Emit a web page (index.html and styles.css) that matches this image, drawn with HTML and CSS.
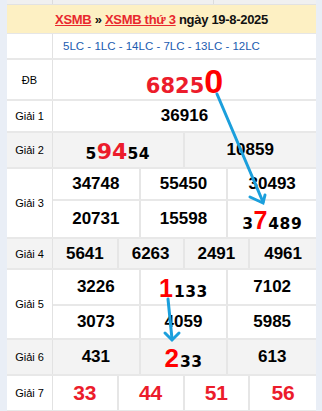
FILE: index.html
```html
<!DOCTYPE html>
<html lang="vi">
<head>
<meta charset="utf-8">
<link rel="stylesheet" href="styles.css">
</head>
<body>
<div class="page">
  <div class="prev"><span class="pl1"></span><span class="pl2"></span></div>
  <div class="head"><span><a href="#">XSMB</a> » <a href="#">XSMB thứ 3</a> ngày 19-8-2025</span></div>
  <div class="codes"><span class="cl"></span>5LC - 1LC - 14LC - 7LC - 13LC - 12LC</div>

  <div class="row h40">
    <div class="label">ĐB</div>
    <div class="cells c1"><div class="cell"><span class="db">6825<b class="bigA z">0</b></span></div></div>
  </div>
  <div class="row h31">
    <div class="label">Giải 1</div>
    <div class="cells c1"><div class="cell num">36916</div></div>
  </div>
  <div class="row gray h35">
    <div class="label">Giải 2</div>
    <div class="cells c2">
      <div class="cell"><span class="hl">5<b class="bigD">94</b>54</span></div>
      <div class="cell num">10859</div>
    </div>
  </div>
  <div class="row">
    <div class="label">Giải 3</div>
    <div class="cells c3 r3">
      <div class="cell num">34748</div>
      <div class="cell num">55450</div>
      <div class="cell num">30493</div>
      <div class="cell num">20731</div>
      <div class="cell num">15598</div>
      <div class="cell"><span class="hl">3<b class="bigA s7">7</b>489</span></div>
    </div>
  </div>
  <div class="row gray h30">
    <div class="label">Giải 4</div>
    <div class="cells c4">
      <div class="cell num">5641</div>
      <div class="cell num">6263</div>
      <div class="cell num">2491</div>
      <div class="cell num">4961</div>
    </div>
  </div>
  <div class="row">
    <div class="label">Giải 5</div>
    <div class="cells c3 r5">
      <div class="cell num">3226</div>
      <div class="cell"><span class="hl"><b class="bigA s1">1</b>133</span></div>
      <div class="cell num">7102</div>
      <div class="cell num">3073</div>
      <div class="cell num">4059</div>
      <div class="cell num">5985</div>
    </div>
  </div>
  <div class="row gray h35">
    <div class="label">Giải 6</div>
    <div class="cells c3">
      <div class="cell num">431</div>
      <div class="cell"><span class="hl"><b class="bigA s2">2</b>33</span></div>
      <div class="cell num">613</div>
    </div>
  </div>
  <div class="row h35">
    <div class="label">Giải 7</div>
    <div class="cells c4">
      <div class="cell red">33</div>
      <div class="cell red">44</div>
      <div class="cell red">51</div>
      <div class="cell red">56</div>
    </div>
  </div>
  <div class="next"></div>

  <svg class="arrows" width="322" height="411" viewBox="0 0 322 411">
    <g stroke="#1b9fdc" stroke-width="3" stroke-linecap="round" fill="none">
      <line x1="217" y1="94" x2="263" y2="202"/>
      <polyline points="250,197 263,203 265,195"/>
      <line x1="168" y1="299" x2="172" y2="339"/>
      <polyline points="165,333 172,340 179,333"/>
    </g>
  </svg>
</div>
</body>
</html>
```
FILE: styles.css
```css
* { box-sizing: border-box; }
html, body { margin: 0; padding: 0; }
body {
  background: #e9eef6;
  font-family: "Liberation Sans", Arial, sans-serif;
  color: #000;
  width: 322px;
  height: 411px;
  overflow: hidden;
}
.page {
  position: relative;
  margin-left: 7px;
  width: 309px;
  background: #fff;
}
.arrows {
  position: absolute;
  left: -7px;
  top: 0;
  pointer-events: none;
}
.prev {
  position: relative;
  height: 5px;
  background: #f0f0f0;
  border-bottom: 1px solid #e2e2e2;
}
.pl1, .pl2 {
  position: absolute;
  top: 0;
  bottom: 0;
  width: 1px;
  background: #dcdcdc;
}
.pl1 { left: 45px; }
.pl2 { left: 206px; }
.head {
  height: 29px;
  background: #fdf0c3;
  border-bottom: 1px solid #e6e6e6;
  display: flex;
  align-items: center;
  justify-content: center;
  font-size: 13px;
  letter-spacing: -0.3px;
  font-weight: bold;
  color: #111;
}
.head a {
  color: #e8282e;
  text-decoration: underline;
}
.codes {
  position: relative;
  height: 26px;
  border-bottom: 2px solid #e8e8e8;
  display: flex;
  align-items: center;
  justify-content: center;
  color: #1b5cb0;
  font-size: 11.5px;
}
.cl {
  position: absolute;
  left: 45px;
  top: 0;
  bottom: 0;
  width: 1px;
  background: #e2e2e2;
}
.row {
  display: flex;
  border-bottom: 2px solid #e8e8e8;
}
.row.gray { background: #f3f3f3; }
.h40 { height: 41px; }
.h31 { height: 32px; }
.h35 { height: 36px; }
.h30 { height: 31px; }
.label {
  width: 46px;
  flex: none;
  border-right: 1px solid #e2e2e2;
  display: flex;
  align-items: center;
  justify-content: center;
  font-size: 11px;
}
.cells {
  flex: 1;
  display: grid;
}
.c1 { grid-template-columns: 1fr; }
.c2 { grid-template-columns: 1fr 1fr; }
.c3 { grid-template-columns: 1fr 1fr 1fr; }
.c4 { grid-template-columns: 1fr 1fr 1fr 1fr; }
.r3 { grid-template-rows: 32px 36px; }
.r5 { grid-template-rows: 36px 32px; }
.r3 .cell:nth-child(-n+3),
.r5 .cell:nth-child(-n+3) { border-bottom: 2px solid #e8e8e8; }
.cell {
  display: flex;
  align-items: center;
  justify-content: center;
  border-right: 2px solid #e6e6e6;
}
.cell:last-child,
.c3 .cell:nth-child(3n),
.c4 .cell:nth-child(4n) { border-right: none; }
.num {
  font-size: 17px;
  font-weight: bold;
}
.red {
  font-size: 21px;
  font-weight: bold;
  color: #ec1c2b;
}
.db {
  font-family: "DejaVu Sans", Verdana, sans-serif;
  font-weight: bold;
  font-size: 21px;
  color: #ec1c2b;
  padding-top: 2px;
}
.hl {
  font-family: "DejaVu Sans", Verdana, sans-serif;
  font-weight: bold;
  font-size: 15.5px;
  letter-spacing: 0.5px;
  color: #000;
  padding-top: 2px;
}
.bigD {
  font-family: "DejaVu Sans", Verdana, sans-serif;
  font-size: 22px;
  letter-spacing: 0;
  color: #ec1c2b;
}
.bigA {
  font-family: "Liberation Sans", Arial, sans-serif;
  color: #ff0000;
  font-weight: bold;
  letter-spacing: 0;
  margin-right: 1px;
}
.z { font-size: 34px; color: #ff0000; margin: 0; }
.s7 { font-size: 25px; }
.s1 { font-size: 25px; }
.s2 { font-size: 26px; }
.next {
  height: 3px;
  background: #fdf0c3;
}
```
